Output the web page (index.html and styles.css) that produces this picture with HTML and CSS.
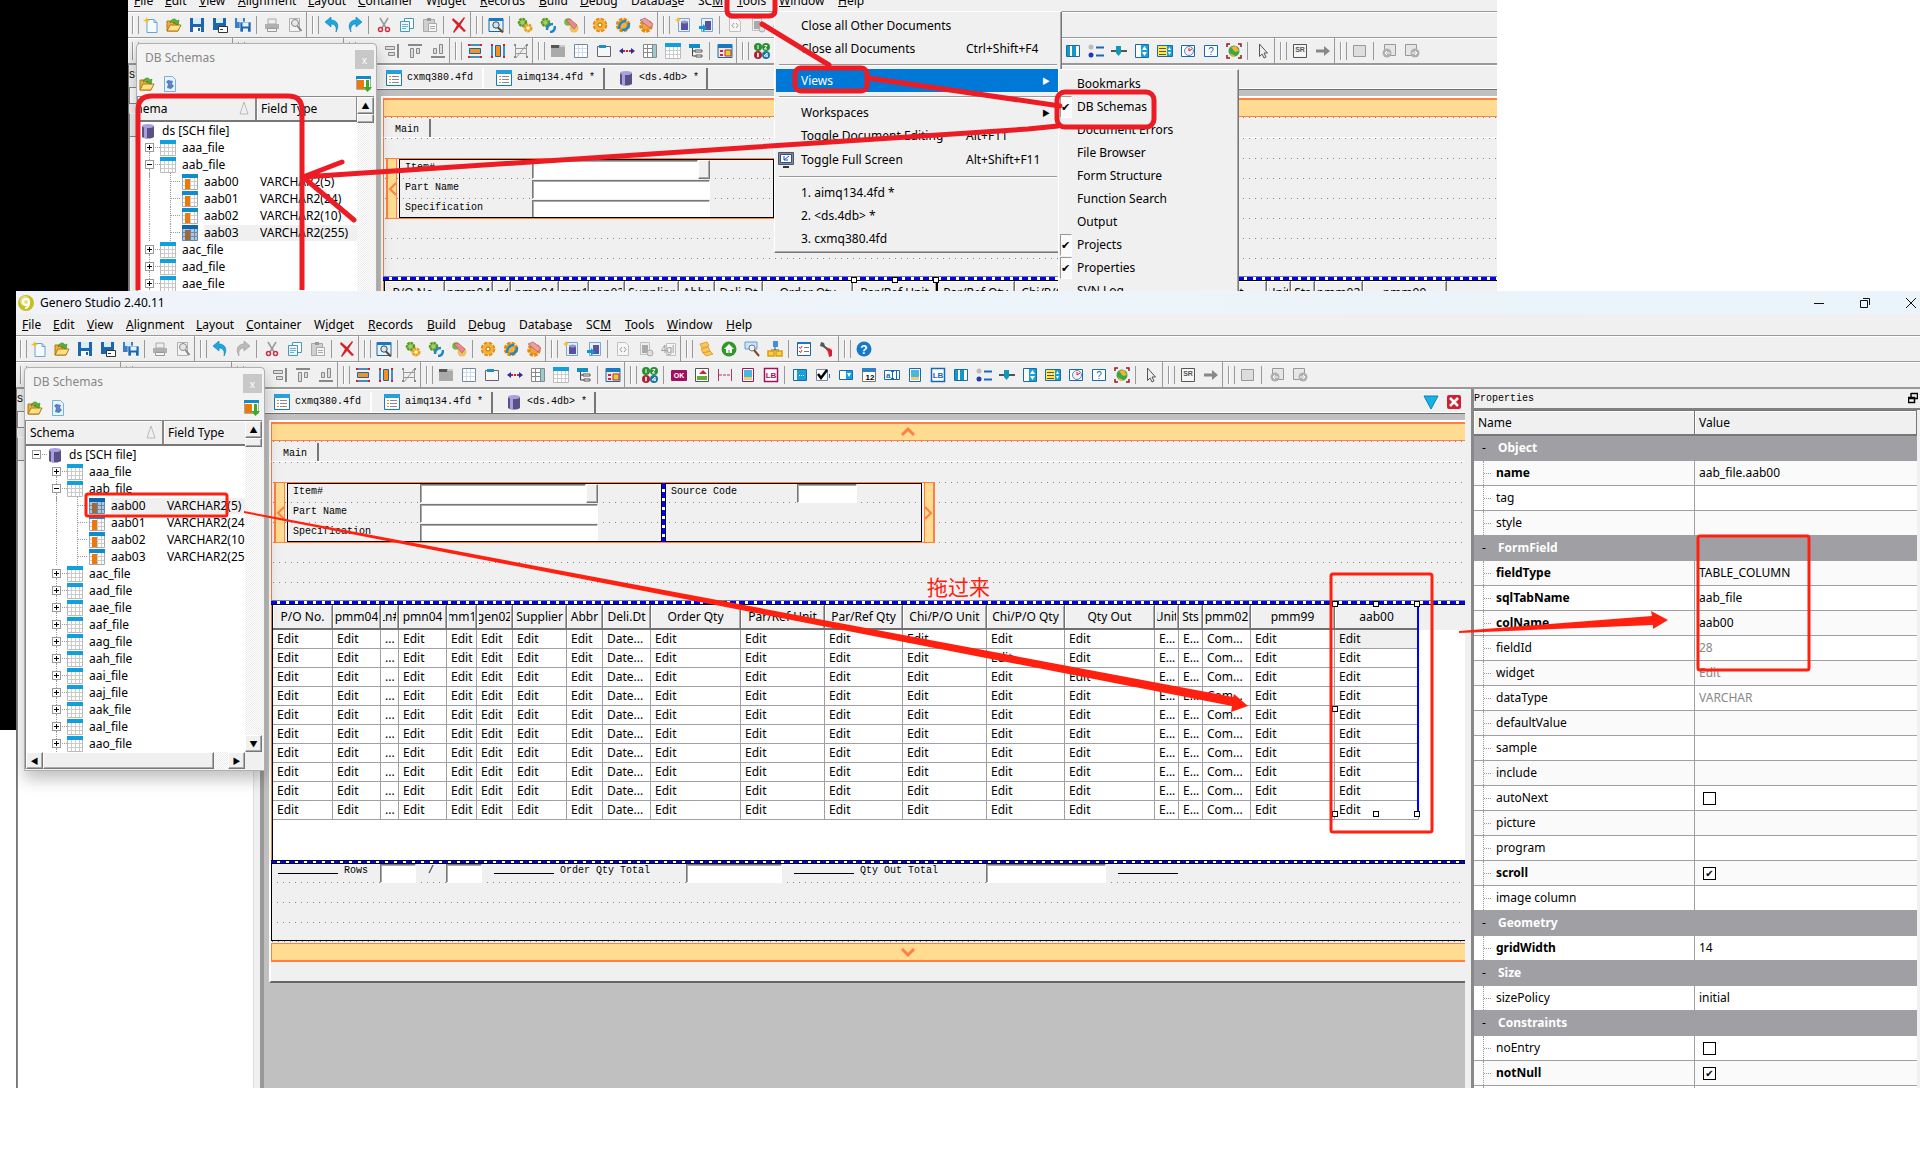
FILE: index.html
```html
<!DOCTYPE html>
<html lang="en">
<head>
<meta charset="utf-8">
<title>Genero Studio 2.40.11</title>
<link rel="stylesheet" href="styles.css">
</head>
<body>
<svg class="sprite" aria-hidden="true">
  <symbol id="i-new" viewBox="0 0 16 16"><path d="M4 2.500h7l3 3v10H4z" fill="#f4fafe" stroke="#6aa5d0"/><path d="M11 2.500v3h3" fill="none" stroke="#6aa5d0"/><path d="M3.500 0l1 2.500L7 3.500l-2.500 1-1 2.500-1-2.500L0 3.500l2.500-1z" fill="#f8c020"/></symbol>
  <symbol id="i-open" viewBox="0 0 16 16"><path d="M1 14V4h4l1 1.500h6V14z" fill="#e8b040" stroke="#b07810"/><path d="M1 14l3-6h11l-3 6z" fill="#ffe08a" stroke="#b07810"/><path d="M4 6c1-5 6-5 7-2l2-1-1 5-5-2 2-1c-1-1-3-1-5 1z" fill="#58b030" stroke="#2e7a14" stroke-width=".5"/></symbol>
  <symbol id="i-save" viewBox="0 0 16 16"><path d="M1 1h14v14H1z" fill="#1c66ae"/><path d="M4 1h8v6H4z" fill="#d8ebf8"/><path d="M4 10h8v5H4z" fill="#fff"/><path d="M9 11h2v3H9z" fill="#1c66ae"/></symbol>
  <symbol id="i-saveas" viewBox="0 0 16 16"><path d="M1 1h13v12H1z" fill="#1c66ae"/><path d="M4 1h7v5H4z" fill="#d8ebf8"/><path d="M6.500 9.500h9v6h-9z" fill="#fff" stroke="#333"/><path d="M8 12h3v1H8z" fill="#333"/></symbol>
  <symbol id="i-saveall" viewBox="0 0 16 16"><path d="M0 1h10v10H0z" fill="#3a80c0"/><path d="M2 1h6v4H2z" fill="#d8ebf8"/><path d="M5 5h11v10H5z" fill="#1c66ae" stroke="#fff" stroke-width=".6"/><path d="M7.500 5.500h6v4h-6zM8 11.500h5V15H8z" fill="#e6f2fa"/></symbol>
  <symbol id="i-print" viewBox="0 0 16 16"><path d="M4 2h8v5H4z" fill="#eee" stroke="#aaa"/><path d="M1 7h14v5H1z" fill="#b0b0b0"/><path d="M3.500 11.500h9v3h-9z" fill="#f4f4f4" stroke="#999"/></symbol>
  <symbol id="i-preview" viewBox="0 0 16 16"><path d="M2.500 1.500h10v13h-10z" fill="#f4f4f4" stroke="#b0b0b0"/><circle cx="8" cy="6" r="3.500" fill="#e6e6e6" stroke="#888"/><path d="M10.500 9l4 5" stroke="#888" stroke-width="2"/></symbol>
  <symbol id="i-undo" viewBox="0 0 16 16"><path d="M1 5l6-5v3c6 0 9 5 5 12 1-5-1-8-5-8v3z" fill="#18a8e0" stroke="#0c78b0" stroke-width=".6"/></symbol>
  <symbol id="i-redo" viewBox="0 0 16 16"><path d="M15 5L9 0v3C3 3 0 8 4 15 3 10 5 7 9 7v3z" fill="#18a8e0" stroke="#0c78b0" stroke-width=".6"/></symbol>
  <symbol id="i-redo-off" viewBox="0 0 16 16"><path d="M15 5L9 0v3C3 3 0 8 4 15 3 10 5 7 9 7v3z" fill="#bbb" stroke="#999" stroke-width=".6"/></symbol>
  <symbol id="i-cut" viewBox="0 0 16 16"><path d="M4 1l6 10M12 1L6 11" stroke="#999" stroke-width="1.500"/><circle cx="4.500" cy="12.500" r="2" fill="none" stroke="#c83040" stroke-width="1.500"/><circle cx="11.500" cy="12.500" r="2" fill="none" stroke="#c83040" stroke-width="1.500"/></symbol>
  <symbol id="i-copy" viewBox="0 0 16 16"><path d="M5.500 1.500h9v10h-9z" fill="#fff" stroke="#4898b8"/><path d="M1.500 4.500h9v10h-9z" fill="#eef8fc" stroke="#4898b8"/><path d="M3 7.500h6M3 9.500h6M3 11.500h4" stroke="#68b0cc"/></symbol>
  <symbol id="i-paste" viewBox="0 0 16 16"><path d="M1.500 2.500h11v12h-11z" fill="#d0d0d0" stroke="#aaa"/><path d="M5 1h4v3H5z" fill="#999"/><path d="M6.500 6.500h8v8h-8z" fill="#f6f6f6" stroke="#aaa"/><path d="M8 9.500h5M8 11.500h5" stroke="#aaa"/></symbol>
  <symbol id="i-delete" viewBox="0 0 16 16"><path d="M2 1l6 5 5-6 1 1-4.500 7L15 14l-2 1-5-5-5 6-1-1 4-7L1 3z" fill="#d82028"/></symbol>
  <symbol id="i-find" viewBox="0 0 16 16"><path d="M1 1.500h14v13H1z" fill="#e6f3fc" stroke="#1868a8"/><path d="M1 1h14v3H1z" fill="#1878c0"/><circle cx="8" cy="8" r="3.200" fill="#c8e8fa" stroke="#444"/><path d="M10 10.500l5 5" stroke="#704018" stroke-width="2"/></symbol>
  <symbol id="i-build1" viewBox="0 0 16 16"><circle cx="5.500" cy="5.500" r="3.500" fill="#a0d068" stroke="#5a9820" stroke-width="2.500" stroke-dasharray="2.500 .7"/><circle cx="11" cy="11" r="3.300" fill="#f8d060" stroke="#e8a020" stroke-width="2.500" stroke-dasharray="2.500 .7"/><circle cx="11" cy="11" r="1.300" fill="#fff"/></symbol>
  <symbol id="i-build2" viewBox="0 0 16 16"><circle cx="5.500" cy="5.500" r="3.500" fill="#a0d068" stroke="#5a9820" stroke-width="2.500" stroke-dasharray="2.500 .7"/><path d="M7 13c0-4 2-6 6-6M10 15c3 0 5-2 5-6" fill="none" stroke="#2088c8" stroke-width="2.500"/></symbol>
  <symbol id="i-build3" viewBox="0 0 16 16"><circle cx="5" cy="5" r="3.800" fill="#78b840"/><circle cx="11" cy="11" r="4.500" fill="#f0c060"/><path d="M3 3l4-1 7 6-3 4z" fill="#e88890" stroke="#b85860" stroke-width=".7"/></symbol>
  <symbol id="i-gear1" viewBox="0 0 16 16"><circle cx="8" cy="8" r="5.500" fill="#f8b030" stroke="#e08c10" stroke-width="3.500" stroke-dasharray="3.200 1.100"/><circle cx="8" cy="8" r="5.500" fill="#f8b030"/><circle cx="8" cy="8" r="2" fill="#fff" stroke="#b06808"/></symbol>
  <symbol id="i-gear2" viewBox="0 0 16 16"><circle cx="8" cy="8" r="5.500" fill="#f8b030" stroke="#e08c10" stroke-width="3.500" stroke-dasharray="3.200 1.100"/><path d="M4 12c0-5 3-8 7-8M7 13c5 0 7-3 7-7" fill="none" stroke="#2088c8" stroke-width="2.500"/></symbol>
  <symbol id="i-gear3" viewBox="0 0 16 16"><circle cx="8" cy="9" r="5" fill="#f8a040" stroke="#e08c10" stroke-width="3.500" stroke-dasharray="3.200 1.100"/><path d="M2 3l5-2 8 6-3 4z" fill="#e8a0a8" stroke="#b85860" stroke-width=".7"/></symbol>
  <symbol id="i-dbnew" viewBox="0 0 16 16"><path d="M3.500 1.500h11v13h-11z" fill="#e4f0fa" stroke="#78a8d0"/><path d="M6 5h7v8H6z" fill="#5850a0"/><ellipse cx="9.500" cy="5" rx="3.500" ry="1.500" fill="#9890d8"/><path d="M3 0l1 2 2 1-2 1-1 2-1-2-2-1 2-1z" fill="#f8c020"/></symbol>
  <symbol id="i-dbin" viewBox="0 0 16 16"><path d="M3.500 1.500h11v13h-11z" fill="#e4f0fa" stroke="#78a8d0"/><path d="M7 4h6v9H7z" fill="#5850a0"/><path d="M1 9h4V7l4 4-4 4v-3H1z" fill="#1890d8"/></symbol>
  <symbol id="i-code" viewBox="0 0 16 16"><path d="M2.500 1.500h8l3 3v10h-11z" fill="#f6f6f6" stroke="#c0c0c0"/><path d="M7 6L5 8.500 7 11M9 6l2 2.500L9 11" fill="none" stroke="#999"/></symbol>
  <symbol id="i-dboff" viewBox="0 0 16 16"><path d="M2.500 1.500h9v12h-9z" fill="#eee" stroke="#c0c0c0"/><path d="M4 4h6v8H4z" fill="#aaa"/><circle cx="12" cy="12" r="3" fill="#ddd" stroke="#aaa"/></symbol>
  <symbol id="i-fgl" viewBox="0 0 16 16"><path d="M5.500 2.500h9v12h-9z" fill="#f6f6f6" stroke="#c0c0c0"/><text x="0" y="12" font-size="10" font-family="Liberation Sans" fill="#999">4gl</text></symbol>
  <symbol id="i-db2" viewBox="0 0 16 16"><path d="M2 3l7-2 2 4-7 2zM3 8l7-2 2 4-7 2zM5 12l7-2 3 3-7 2z" fill="#f8c860" stroke="#e8a030"/></symbol>
  <symbol id="i-home" viewBox="0 0 16 16"><circle cx="8" cy="8" r="7.500" fill="#2f9a28"/><path d="M8 3L3 8h2v4h2.500V9h1v3H11V8h2z" fill="#fff"/></symbol>
  <symbol id="i-codefind" viewBox="0 0 16 16"><path d="M1 1h12v7H1z" fill="#c8e4f6" stroke="#60a0cc"/><circle cx="8" cy="7" r="3" fill="#eef" stroke="#777"/><path d="M10 9l5 6" stroke="#804820" stroke-width="2"/></symbol>
  <symbol id="i-tree2" viewBox="0 0 16 16"><path d="M6 0h5v6H6z" fill="#4090e0"/><path d="M8 6v3M4 9h8" stroke="#555"/><path d="M1 10h6v5H1zM9 10h6v5H9z" fill="#f8d040" stroke="#d8a010" stroke-width="1.500"/></symbol>
  <symbol id="i-prefs" viewBox="0 0 16 16"><path d="M1.500 1.500h13v13h-13z" fill="#fff" stroke="#1868a8"/><path d="M1 1h14v2H1z" fill="#1878c0"/><path d="M3 6l1.500 1.500L6 5M3 10l1.500 1.500L6 9" stroke="#d02020" fill="none"/><path d="M8 6.500h5M8 10.500h5" stroke="#777"/></symbol>
  <symbol id="i-tools" viewBox="0 0 16 16"><path d="M2 1l3 1 1 3 3 2-1 2-4-3-3-1z" fill="#555"/><path d="M7 8l3-1 3 2v6l-3 1-1-5z" fill="#d82028"/></symbol>
  <symbol id="i-help" viewBox="0 0 16 16"><circle cx="8" cy="8" r="7.500" fill="#1878c8"/><text x="8" y="12.500" text-anchor="middle" font-size="12" font-weight="bold" font-family="Liberation Sans" fill="#fff">?</text></symbol>
  <symbol id="i-al1" viewBox="0 0 16 16"><path d="M1.500 3.500h9v3h-9zM4.500 9.500h6v3h-6z" fill="#ddd" stroke="#888"/><path d="M14 1v14" stroke="#888" stroke-width="2"/></symbol>
  <symbol id="i-al2" viewBox="0 0 16 16"><path d="M1 2h14" stroke="#888" stroke-width="2"/><path d="M3.500 5.500h3v9h-3zM9.500 5.500h3v5h-3z" fill="#ddd" stroke="#888"/></symbol>
  <symbol id="i-al3" viewBox="0 0 16 16"><path d="M1 14h14" stroke="#888" stroke-width="2"/><path d="M3.500 5.500h3v5h-3zM9.500 1.500h3v9h-3z" fill="#ddd" stroke="#888"/></symbol>
  <symbol id="i-lh" viewBox="0 0 16 16"><path d="M2 2h12M2 14h12" stroke="#1868a8" stroke-width="1.500"/><path d="M2.500 5.500h11v5h-11z" fill="#f89020" stroke="#1868a8"/><path d="M1 1h2v2H1zM13 1h2v2h-2zM1 13h2v2H1zM13 13h2v2h-2z" fill="#d02030"/></symbol>
  <symbol id="i-lv" viewBox="0 0 16 16"><path d="M2 2v12M14 2v12" stroke="#1868a8" stroke-width="1.500"/><path d="M5.500 2.500h5v11h-5z" fill="#f89020" stroke="#1868a8"/><path d="M1 1h2v2H1zM13 1h2v2h-2zM1 13h2v2H1zM13 13h2v2h-2z" fill="#d02030"/></symbol>
  <symbol id="i-lx" viewBox="0 0 16 16"><path d="M2.500 2v12M13.500 2v12M2 5.500h12M2 10.500h12M3 15L14 1" fill="none" stroke="#999"/><path d="M1 1h2v2H1zM13 1h2v2h-2zM1 13h2v2H1zM13 13h2v2h-2z" fill="#888"/></symbol>
  <symbol id="i-folder" viewBox="0 0 16 16"><path d="M1 2h14v12H1z" fill="#aaa"/><path d="M1 2h8v3H1z" fill="#555"/><path d="M10 2h5v2h-5z" fill="#ccc"/></symbol>
  <symbol id="i-grid" viewBox="0 0 16 16"><path d="M1.500 1.500h13v13h-13z" fill="#fff" stroke="#789"/><path d="M5.500 2v12M9.500 2v12M2 5.500h12M2 9.500h12" stroke="#cde"/></symbol>
  <symbol id="i-group" viewBox="0 0 16 16"><path d="M1.500 3.500h13v10h-13z" fill="#f6f6f6" stroke="#667"/><path d="M3 2h7v3H3z" fill="#1890c8"/></symbol>
  <symbol id="i-hbox" viewBox="0 0 16 16"><path d="M0 8l4-3v6zM16 8l-4-3v6z" fill="#2030b0"/><path d="M4 8h8" stroke="#d02030" stroke-width="2" stroke-dasharray="2 1"/></symbol>
  <symbol id="i-scrollgrid" viewBox="0 0 16 16"><path d="M1.500 1.500h13v13h-13zM2 5.500h12M2 9.500h12M5.500 2v12M10.500 2v12" fill="#fff" stroke="#888"/><path d="M11 2h3v12h-3z" fill="#9cc"/></symbol>
  <symbol id="i-table" viewBox="0 0 16 16"><path d="M.5 2.500h15v13H.5z" fill="#fff" stroke="#bbb"/><path d="M0 0h16v4H0z" fill="#10a0dc"/><path d="M4.500 4v11M8.500 4v11M12.500 4v11M1 7.500h14M1 11.500h14" stroke="#ccc"/></symbol>
  <symbol id="i-tree" viewBox="0 0 16 16"><path d="M1 1h11v4H1z" fill="#108cc8"/><path d="M4.500 5v8H8M4.500 8H8" fill="none" stroke="#444"/><path d="M7 7h7v2H7zM8 12h6v2H8z" fill="#fff" stroke="#555"/></symbol>
  <symbol id="i-form" viewBox="0 0 16 16"><path d="M1 1.500h14v13H1z" fill="#f4e8d0" stroke="#1868a8"/><path d="M1 1h14v4H1z" fill="#1878c0"/><path d="M8 7h6v6H8z" fill="#e8d020" stroke="#b82858"/><path d="M3 7h3v2H3zM3 11h3v2H3z" fill="#b82858"/></symbol>
  <symbol id="i-1234" viewBox="0 0 16 16"><g font-size="9" font-weight="bold" font-family="Liberation Sans" text-anchor="middle"><circle cx="4" cy="4" r="4" fill="#289030"/><circle cx="12" cy="4" r="4" fill="#289030"/><circle cx="4" cy="12" r="4" fill="#b02030"/><circle cx="12" cy="12" r="4" fill="#1878a8"/></g><path d="M4 2v4M10.500 2.500h2.500L10.500 6H13M3 10l2 1-2 1 2 1-2 1M13 14v-4l-3 3h4" fill="none" stroke="#fff"/></symbol>
  <symbol id="i-ok" viewBox="0 0 16 16"><rect x="0" y="3" width="16" height="11" rx="1" fill="#a01060"/><text x="8" y="11" text-anchor="middle" font-size="7" font-weight="bold" font-family="Liberation Sans" fill="#fff">OK</text></symbol>
  <symbol id="i-image" viewBox="0 0 16 16"><path d="M1.500 1.500h13v13h-13z" fill="#fff" stroke="#555"/><path d="M5 7l4-4 4 4z" fill="#d02030"/><path d="M3 9h10v4H3z" fill="#60b030"/></symbol>
  <symbol id="i-hline" viewBox="0 0 16 16"><path d="M1.500 2v12M14.500 2v12" fill="none" stroke="#b03070"/><path d="M2 8h12" stroke="#b03070" stroke-dasharray="3 1"/></symbol>
  <symbol id="i-pic" viewBox="0 0 16 16"><path d="M2.500 1.500h11v13h-11z" fill="#fff" stroke="#a01060"/><path d="M4 3h8v10H4z" fill="#48b8e0"/><path d="M4 10h8v3H4z" fill="#f0d060"/></symbol>
  <symbol id="i-picb" viewBox="0 0 16 16"><path d="M2.500 1.500h11v13h-11z" fill="#fff" stroke="#1868b8"/><path d="M4 3h8v10H4z" fill="#48b8e0"/><path d="M4 10h8v3H4z" fill="#f0d060"/></symbol>
  <symbol id="i-lb" viewBox="0 0 16 16"><path d="M1.500 1.500h13v13h-13z" fill="#fff" stroke="#a01060" stroke-width="1.500"/><text x="8" y="11" text-anchor="middle" font-size="8" font-weight="bold" font-family="Liberation Sans" fill="#a01060">LB</text></symbol>
  <symbol id="i-lbb" viewBox="0 0 16 16"><path d="M1.500 1.500h13v13h-13z" fill="#fff" stroke="#1868b8" stroke-width="1.500"/><text x="8" y="11" text-anchor="middle" font-size="8" font-weight="bold" font-family="Liberation Sans" fill="#1868b8">LB</text></symbol>
  <symbol id="i-btnedit" viewBox="0 0 16 16"><path d="M1.500 2.500h13v11h-13z" fill="#f0f8ff" stroke="#1868b8"/><path d="M5 3h9v10H5z" fill="#18a0d8"/><path d="M7 8.500h6" stroke="#fff" stroke-dasharray="1 1"/></symbol>
  <symbol id="i-check" viewBox="0 0 16 16"><path d="M1.500 2.500h11v11h-11z" fill="#fff" stroke="#78a"/><path d="M3 7l3 4 6-8" fill="none" stroke="#000" stroke-width="2.500"/><path d="M14.500 7v4" stroke="#1868b8"/></symbol>
  <symbol id="i-combo" viewBox="0 0 16 16"><path d="M1.500 3.500h13v9h-13z" fill="#fff" stroke="#1868b8"/><path d="M8 4h6v8H8z" fill="#18a0d8"/><path d="M9 6h4l-2 4z" fill="#fff"/></symbol>
  <symbol id="i-date" viewBox="0 0 16 16"><path d="M1.500 2.500h13v12h-13z" fill="#fff" stroke="#777"/><path d="M1 1h14v4H1z" fill="#3080c8"/><text x="9" y="13" text-anchor="middle" font-size="8" font-weight="bold" font-family="Liberation Sans">12</text></symbol>
  <symbol id="i-edit" viewBox="0 0 16 16"><path d="M.5 3.500h15v9H.5z" fill="#fff" stroke="#1868b8"/><text x="2" y="11" font-size="8" font-weight="bold" font-family="Liberation Sans" fill="#1868b8">a</text><path d="M8.500 5v6M7 4.500h3M7 11.500h3M12.500 4v8" stroke="#1868b8"/></symbol>
  <symbol id="i-prog" viewBox="0 0 16 16"><path d="M1.500 2.500h13v11h-13z" fill="#fff" stroke="#1868b8"/><path d="M2 3h3v10H2zM7 3h4v10H7z" fill="#1498c8"/></symbol>
  <symbol id="i-radio" viewBox="0 0 16 16"><circle cx="3" cy="4" r="2.500" fill="#bbb"/><circle cx="3" cy="12" r="2.500" fill="#2038c0"/><path d="M8 4.500h8M8 12.500h8" stroke="#1868b8" stroke-width="2"/></symbol>
  <symbol id="i-slider" viewBox="0 0 16 16"><path d="M0 8h16" stroke="#555" stroke-width="2"/><path d="M5 3h5v7l-2.500 3L5 10z" fill="#1098b8"/></symbol>
  <symbol id="i-spin" viewBox="0 0 16 16"><path d="M1.500 1.500h13v13h-13z" fill="#fff" stroke="#1868b8"/><path d="M7 2h7v12H7z" fill="#18a0d8"/><path d="M8 7h5l-2.500-4zM8 9h5l-2.500 4z" fill="#fff"/></symbol>
  <symbol id="i-text" viewBox="0 0 16 16"><path d="M.5 2.500h15v11H.5z" fill="#ffe850" stroke="#1868b8"/><path d="M2 5.500h7M2 8.500h7M2 11.500h7" stroke="#555"/><path d="M10 3h5v10h-5z" fill="#18a0d8"/><path d="M11 7h3l-1.500-3zM11 9h3l-1.500 3z" fill="#fff"/></symbol>
  <symbol id="i-time" viewBox="0 0 16 16"><path d="M1.500 2.500h13v11h-13z" fill="#fff" stroke="#1868b8"/><circle cx="9" cy="8" r="4.500" fill="#f0f0fa" stroke="#68a"/><path d="M9 8V5M9 8l3-2" stroke="#d02020"/></symbol>
  <symbol id="i-unk" viewBox="0 0 16 16"><path d="M1.500 2.500h13v11h-13z" fill="#fff" stroke="#1868b8"/><text x="8" y="12" text-anchor="middle" font-size="10" font-family="Liberation Sans" fill="#1868b8">?</text></symbol>
  <symbol id="i-web" viewBox="0 0 16 16"><circle cx="8" cy="8" r="5.500" fill="#38a848"/><path d="M5 4l5-1 3 5-4 1zM4 10l5 3-3 1z" fill="#f8b030"/><path d="M1 4V1h3M12 1h3v3M15 12v3h-3M4 15H1v-3" fill="none" stroke="#a01020" stroke-width="1.500"/></symbol>
  <symbol id="i-arrow" viewBox="0 0 16 16"><path d="M4.500 1l8 9H9l2 4-2 1-2-4-2.500 2.500z" fill="#eee" stroke="#555"/></symbol>
  <symbol id="i-sr" viewBox="0 0 16 16"><path d="M1.500 1.500h13v13h-13z" fill="#f6f6f6" stroke="#555"/><text x="8" y="9" text-anchor="middle" font-size="7" font-weight="bold" font-family="Liberation Sans" fill="#555">SR</text></symbol>
  <symbol id="i-go" viewBox="0 0 16 16"><path d="M1 6.500h8V3l6 5-6 5V9.500H1z" fill="#888"/></symbol>
  <symbol id="i-box" viewBox="0 0 16 16"><path d="M1.500 2.500h12v11h-12z" fill="#ddd" stroke="#999"/></symbol>
  <symbol id="i-back" viewBox="0 0 16 16"><path d="M3.500 1.500h11v11h-11z" fill="#e6e6e6" stroke="#999"/><circle cx="6" cy="10" r="4.500" fill="#b0b0b0"/><path d="M9 10H4M6 8l-2 2 2 2" fill="none" stroke="#fff"/></symbol>
  <symbol id="i-fwd" viewBox="0 0 16 16"><path d="M1.500 1.500h11v11h-11z" fill="#e6e6e6" stroke="#999"/><circle cx="11" cy="10" r="4.500" fill="#b0b0b0"/><path d="M8 10h5M11 8l2 2-2 2" fill="none" stroke="#fff"/></symbol>
  <symbol id="i-db" viewBox="0 0 16 16"><path d="M2 3v11c3 2 9 2 12 0V3z" fill="#5a5088"/><path d="M4 3v12h3V3z" fill="#a8a0d8"/><ellipse cx="8" cy="3" rx="6" ry="2" fill="#a8a0e0"/></symbol>
  <symbol id="i-column" viewBox="0 0 16 16"><path d="M.5 2.500h15v13H.5z" fill="#fff" stroke="#aaa"/><path d="M0 0h16v4H0z" fill="#108cc8"/><path d="M8.500 4v11M12.500 4v11M1 7.500h14M1 11.500h14" stroke="#ccc"/><path d="M3 5h5v10H3z" fill="#f07808"/></symbol>
  <symbol id="i-column-on" viewBox="0 0 16 16"><path d="M.5 2.500h15v13H.5z" fill="#a8c8e8" stroke="#68a"/><path d="M0 0h16v4H0z" fill="#0868b0"/><path d="M8.500 4v11M12.500 4v11M1 7.500h14M1 11.500h14" stroke="#789"/><path d="M3 5h5v10H3z" fill="#a06838"/></symbol>
  <symbol id="i-import" viewBox="0 0 16 16"><path d="M.5 2.500h14v11H.5z" fill="#fff" stroke="#aaa"/><path d="M0 0h15v3H0z" fill="#108cc8"/><path d="M1 4h7v9H1z" fill="#f07808"/><path d="M10 4h3v7h3l-4.500 5L7 11h3z" fill="#40a828"/></symbol>
  <symbol id="i-refresh" viewBox="0 0 16 16"><path d="M2.500.5h8l3 3v12h-11z" fill="#e8f4fd" stroke="#78b0dc"/><path d="M6 4l5 1-1 3 2 2-3 3-4-1 1-4-2-2z" fill="#5080c8"/><path d="M7 6l2 1-1 3z" fill="#b070c0"/></symbol>
  <symbol id="i-doc" viewBox="0 0 16 16"><path d="M.5 1.500h15v14H.5z" fill="#fff" stroke="#1878c0"/><path d="M0 0h16v4H0z" fill="#28a0e0"/><path d="M3 6.500h2M3 9.500h2M3 12.500h2" stroke="#d89020"/><path d="M6 6.500h7M6 9.500h7M6 12.500h7" stroke="#889"/></symbol>
  <symbol id="i-full" viewBox="0 0 16 16"><path d="M.5.5h15v12H.5z" fill="#889" stroke="#555"/><path d="M2.500 2.500h11v8h-11z" fill="#fff" stroke="#2050b0"/><path d="M6 4v4h4M6 8l5-4" fill="none" stroke="#2050b0"/><path d="M5 14h6v2H5z" fill="#333"/></symbol>
  <symbol id="i-logo" viewBox="0 0 16 16"><circle cx="8" cy="8" r="8" fill="#c8c020"/><circle cx="7" cy="6" r="5" fill="#e4e080"/><circle cx="8" cy="7" r="3" fill="none" stroke="#fff" stroke-width="2"/><path d="M11 7c0 4-1 6-4 6" fill="none" stroke="#fff" stroke-width="2"/></symbol>
</svg>

<main class="desktop">
  <div class="backdrop"></div>

  <section class="window window-back" data-scroll="19" data-selected="aab03" data-columns="19">
    <div class="app"></div>
    <div class="menu menu-window" role="menu">
      <button class="item" role="menuitem">Close all Other Documents</button>
      <button class="item" role="menuitem">Close all Documents<span class="keys">Ctrl+Shift+F4</span></button>
      <hr>
      <button class="item active" role="menuitem">Views<span class="more">▶</span></button>
      <hr>
      <button class="item" role="menuitem">Workspaces<span class="more">▶</span></button>
      <button class="item" role="menuitem">Toggle Document Editing<span class="keys">Alt+F11</span></button>
      <button class="item tall" role="menuitem"><svg class="item-icon"><use href="#i-full"/></svg>Toggle Full Screen<span class="keys">Alt+Shift+F11</span></button>
      <hr>
      <button class="item" role="menuitem">1. aimq134.4fd *</button>
      <button class="item" role="menuitem">2. &lt;ds.4db&gt; *</button>
      <button class="item" role="menuitem">3. cxmq380.4fd</button>
    </div>
    <div class="menu menu-views" role="menu">
      <button class="item" role="menuitem">Bookmarks</button>
      <button class="item" role="menuitem"><span class="tick">✔</span>DB Schemas</button>
      <button class="item" role="menuitem">Document Errors</button>
      <button class="item" role="menuitem">File Browser</button>
      <button class="item" role="menuitem">Form Structure</button>
      <button class="item" role="menuitem">Function Search</button>
      <button class="item" role="menuitem">Output</button>
      <button class="item" role="menuitem"><span class="tick">✔</span>Projects</button>
      <button class="item" role="menuitem"><span class="tick">✔</span>Properties</button>
      <button class="item" role="menuitem">SVN Log</button>
    </div>
  </section>

  <section class="window window-front" data-scroll="0" data-selected="aab00" data-columns="20" data-properties="yes">
    <div class="app"></div>
  </section>

  <svg class="notes" width="1920" height="1088" viewBox="0 0 1920 1088" aria-hidden="true">
    <g fill="none" stroke="#ed1c24" stroke-width="5" stroke-linecap="round" stroke-linejoin="round">
      <path d="M138 290V110q0-14 14-14h136q14 0 14 14v180" stroke-linecap="butt"/>
      <path d="M727 0v10q0 6 6 6h36q6 0 6-6V0M762 24l67 41"/>
      <rect x="795" y="68" width="72" height="23" rx="6"/>
      <path d="M868 78l192 28"/>
      <rect x="1057" y="92" width="97" height="35" rx="8"/>
      <path d="M1058 126l-30 3-725 48M342 162l-39 15 51 43" stroke-width="5"/>
    </g>
    <g fill="none" stroke="#ff2010" stroke-width="3">
      <rect x="86" y="494" width="141" height="22" rx="2"/>
      <rect x="1331" y="574" width="101" height="258" rx="2"/>
      <rect x="1698" y="536" width="111" height="134" rx="2"/>
    </g>
    <g fill="#ff2010">
      <path d="M244 511L1233 697l1-3 14 12-17 6 1-6L244 513z"/>
      <path d="M1459 631l193-15-1-5 17 9-15 9v-4l-194 8z"/>
      <text class="note-text" x="927" y="595">拖过来</text>
    </g>
  </svg>
</main>
<script src="app.js"></script>
</body>
</html>
```
FILE: styles.css
```css
* { box-sizing: border-box; }
body {
  margin: 0;
  background: #fff;
  color: #000;
  font: 12px/16px "Noto Sans", "Noto Sans CJK SC", sans-serif;
}
button { font: inherit; color: inherit; padding: 0; border: 0; background: none; text-align: left; }
ul { list-style: none; margin: 0; padding: 0; }
.sprite { display: none; }
.ico { width: 16px; height: 16px; display: block; flex: none; }
.mono { font: 10px/14px "Liberation Mono", monospace; white-space: pre; }

/* desktop */
.desktop { position: relative; height: 1088px; overflow: hidden; }
.backdrop { position: absolute; left: 0; top: 0; width: 128px; height: 730px; background: #000; }
.window { position: absolute; background: #f0f0f0; overflow: hidden; }
.window-back { left: 128px; right: 423px; top: -33px; height: 324px; }
.window-front { left: 16px; right: 0; top: 291px; bottom: 0; }
.app { display: flex; flex-direction: column; height: 100%; }
.window-back .app { min-height: 800px; }
.notes { position: absolute; left: 0; top: 0; }
.note-text { font: 21px "Noto Sans CJK SC", sans-serif; }

/* title bar and menu bar */
.titlebar { display: flex; align-items: center; height: 23px; padding-left: 2px; background: linear-gradient(90deg, #f0f3fa, #eaf4fa); }
.titlebar h1 { margin: 0 auto 0 6px; font-size: 12px; font-weight: 400; }
.titlebar button { width: 46px; height: 22px; display: flex; justify-content: center; align-items: center; }
.titlebar button:last-child { width: 18px; margin-left: 14px; }
.titlebar button svg { width: 12px; height: 12px; fill: none; stroke: #111; }
.menubar { display: grid; grid-template-columns: 31px 34px 39px 70px 50px 68px 54px 59px 41px 51px 67px 39px 42px 59px 40px; height: 21px; padding-left: 6px; align-items: center; }
.menubar button { white-space: nowrap; }

/* toolbars */
.toolrow { display: flex; height: 26px; border-top: 1px solid #999; box-shadow: inset 0 1px #fff; }
.toolrow + .toolrow { border-bottom: 2px solid #999; height: 28px; }
.toolgroup { display: flex; align-items: center; padding-left: 12px; border-right: 1px solid #999; margin-right: 1px; position: relative; }
.toolgroup:first-child { padding-left: 11px; }
.toolgroup::before { content: ""; position: absolute; left: 4px; top: 4px; bottom: 3px; width: 5px; border: solid #999; border-width: 0 1px; box-shadow: inset 1px 0 #fff; }
.toolgroup button { width: 23px; height: 22px; display: grid; place-items: center; }
.toolgroup i { width: 1px; height: 18px; margin: 0 3px 0 2px; background: #999; }
.toolgroup:last-child { border-right: 0; }
.toolgroup.four { width: 105px; }
.toolgroup.five { width: 110px; }

/* main split */
.main { flex: 1; display: flex; min-height: 0; }
.dock { width: 248px; flex: none; display: flex; flex-direction: column; border-left: 1px solid #777; border-right: 4px solid #999; padding-right: 6px; }
.dock-title { height: 22px; padding-top: 4px; }
.dock-combo { height: 17px; background: #fff; border: 1px solid #888; }
.dock-head { height: 24px; margin-top: 9px; border: 1px solid #888; border-top-color: #fff; }
.dock-list { flex: 1; background: #fff; border-left: 1px solid #888; border-right: 1px solid #ddd; }

/* editor */
.editor { flex: 1; min-width: 0; display: flex; flex-direction: column; }
.tabs { display: flex; align-items: center; height: 25px; padding: 2px 0 0 1px; border-bottom: 1px solid #707070; box-shadow: inset 0 1px #fff, inset 0 -1px #fff; }
.tab { display: flex; align-items: center; gap: 5px; height: 21px; border-right: 2px solid #fff; }
.tab.first { width: 107px; padding-left: 9px; }
.tab.second { width: 121px; padding-left: 12px; border-right-color: #777; }
.tab.third { width: 103px; padding-left: 13px; border-right-color: #777; }
.tab-tools { margin-left: auto; display: flex; gap: 7px; padding-right: 3px; }
.canvas { flex: 1; background: #c0c0c0; padding: 6px 0 0 5px; overflow: hidden; }
.form { border: solid #fff; border-width: 2px 0 0 2px; background: #f0f0f0; border-bottom: 2px solid #666; }
.dots { background: conic-gradient(from 270deg at 1px 1px, #888 90deg, transparent 0) 7px 0 / 6px 20px; }
.band { height: 19px; border: solid #ff8040; border-width: 2px 0 1px 1px; background: #ffdc91; padding-left: 628px; }
.band.bottom { border-width: 1px 0 2px 1px; }
.band svg { display: block; width: 16px; height: 16px; fill: none; stroke: #ff8040; stroke-width: 3; }
.pages { height: 21px; padding-top: 2px; border-bottom: 1px solid #fff; border-left: 1px solid #ff8040; }
.page-tab { display: block; width: 47px; height: 18px; padding: 4px 0 0 11px; border-right: 2px solid #777; }
.page { height: 138px; padding: 20px 0 0 2px; border-left: 1px solid #ff8040; }
.hbox { display: flex; width: 661px; height: 61px; border: 1px solid #ff8040; border-left: 0; border-right: 0; }
.strip { width: 11px; background: #ffdc91; border: solid #ff8040; border-width: 0 1px 0 2px; display: flex; align-items: center; }
.strip.right { border-width: 0 2px 0 1px; margin-left: auto; }
.strip svg { width: 8px; height: 16px; fill: none; stroke: #ff8040; stroke-width: 2; }
.cell { border: 1px solid #000; margin-left: 2px; width: 375px; display: grid; grid-template-columns: 132px 178px; grid-auto-rows: 20px; height: 59px; overflow: hidden; }
.cell.source { margin-left: 0; width: 257px; grid-template-columns: 131px 60px; }
.cell label { padding-left: 5px; padding-top: 1px; }
.divider { width: 3px; background: repeating-linear-gradient(#00f 0 6px, #fff 6px 9px); }
.sunken { width: 100%; height: 19px; margin: 0; padding: 0 3px; border: 1px solid; border-color: #777 #fff #fff #777; outline: 0; background: #fff; box-shadow: inset 1px 1px #aaa; border-radius: 0; }
.pick { display: flex; }
.pick button { width: 12px; height: 19px; flex: none; background: #f0f0f0; border: 1px solid; border-color: #fff #777 #777 #fff; box-shadow: inset -1px -1px #aaa; }
.rule { height: 5px; border: solid #808080; border-width: 1px 0; border-bottom-color: #000; background: repeating-linear-gradient(90deg, #00f 0 6px, #fff 6px 9px); }
.rule.low { height: 4px; border-top-color: #000; }
.sheet { height: 255px; padding-left: 1px; background: #fff; border-left: 1px solid #ff8040; box-shadow: inset 1px 0 #000; position: relative; }
.sheet table, .props table { border-collapse: separate; border-spacing: 0; table-layout: fixed; }
.sheet table { width: 100%; }
.sheet th { height: 25px; padding: 0 2px; font-weight: 400; background: #f0f0f0; border: solid #707070; border-width: 0 1px 2px 0; box-shadow: inset 1px 1px #fff, inset -1px 0 #aaa; }
.sheet th span { display: flex; justify-content: center; white-space: nowrap; overflow: hidden; }
.sheet th:last-child { border: 0; box-shadow: none; }
.sheet td { height: 19px; padding: 0 0 0 4px; border: solid #a0a0a4; border-width: 0 1px 1px 0; white-space: nowrap; overflow: hidden; }
.sheet td:last-child { border: 0; }
.sheet td.picked { background: #f0f0f0; }
.selection { position: absolute; }
.selection::before { content: ""; position: absolute; right: 0; top: 3px; bottom: 0; border-right: 2px solid #00f; }
.selection.new { left: 1060px; width: 87px; top: -4px; height: 216px; }
.selection.old { left: 467px; width: 87px; top: -4px; height: 230px; }
.selection.old::before { border-color: #000; }
.selection b { position: absolute; width: 6px; height: 6px; background: #fff; border: 1px solid #000; }
.selection b:nth-child(1) { left: 0; top: 0; }
.selection b:nth-child(2) { left: 41px; top: 0; }
.selection b:nth-child(3) { right: -1px; top: 0; }
.selection b:nth-child(4) { left: 0; top: 105px; }
.selection b:nth-child(5) { left: 0; bottom: 0; }
.selection b:nth-child(6) { left: 41px; bottom: 0; }
.selection b:nth-child(7) { right: -1px; bottom: 0; }
.totals { height: 77px; border-left: 1px solid #000; border-bottom: 1px solid #000; display: flex; gap: 12px; padding-left: 6px; background-position: 5px 18px; }
.totals .line { width: 60px; height: 10px; border-bottom: 1px solid #000; }
.totals label { margin-left: -6px; }
.w36 { width: 36px; } .w96 { width: 96px; } .w120 { width: 120px; }
.totals .qty { width: 114px; } .totals .out { width: 114px; }
.gap { height: 2px; }
.tail { height: 19px; }

/* DB Schemas floating panel */
.schemas { position: absolute; left: 8px; top: 76px; width: 241px; height: 404px; background: #f3f3f3; border: 1px solid #b0b0b0; border-radius: 4px 4px 0 0; box-shadow: 0 8px 16px rgba(0,0,0,.25); }
.schemas header { display: flex; justify-content: space-between; height: 30px; padding: 6px 2px 0 8px; color: #888; }
.schemas header button { width: 19px; height: 19px; background: #c8c8c8; color: #fff; text-align: center; font-size: 10px; }
.schema-tools { display: flex; gap: 7px; height: 22px; padding: 2px 4px 4px 2px; }
.schema-tools button:last-child { margin-left: auto; }
.browser { display: grid; grid-template-columns: 1fr 17px; margin-right: 2px; border: solid #888; border-width: 1px 0 0 1px; background: #fff; }
.view { overflow: hidden; height: 331px; }
.view-inner { width: 239px; }
.cols { display: flex; height: 25px; background: #f0f0f0; border-bottom: 2px solid #777; align-items: center; }
.cols span { height: 23px; padding: 4px 0 0 4px; border-right: 2px solid #888; box-shadow: inset 1px 1px #fff; display: flex; justify-content: space-between; }
.cols span:first-child { width: 138px; padding-right: 6px; }
.cols span:last-child { width: 101px; }
.cols svg { width: 10px; height: 14px; fill: none; stroke: #bbb; }
.tree li { display: flex; height: 17px; align-items: center; }
.tree .name { display: flex; align-items: center; width: 141px; flex: none; height: 17px; gap: 6px; white-space: nowrap; }
.tree .l0 { padding-left: 6px; }
.tree .l1 { padding-left: 26px; }
.tree .l2 { padding-left: 30px; }
.tree .l2::before { content: ""; }
.twist { width: 9px; height: 9px; border: 1px solid #999; background: linear-gradient(#000, #000) 1px 3px / 5px 1px no-repeat #fff; position: relative; flex: none; }
.twist.plus { background: linear-gradient(#000, #000) 1px 3px / 5px 1px no-repeat, linear-gradient(#000, #000) 3px 1px / 1px 5px no-repeat #fff; }
.twist::after { content: ""; position: absolute; left: 9px; top: 3px; width: 5px; border-top: 1px dotted #999; }
.l1 .twist::before { content: ""; position: absolute; left: 3px; top: 8px; height: 8px; border-left: 1px dotted #999; }
.l2::before { width: 20px; height: 17px; margin-right: -2px; border-left: 1px dotted #999; }
.l2 .branch { width: 10px; height: 17px; margin: 0 -4px 0 -4px; border-left: 1px dotted #999; background: repeating-linear-gradient(90deg, #999 0 1px, transparent 1px 2px) 0 8px / 10px 1px no-repeat; }
.tree .on .type, .tree .on .label { background: #f0f0f0; }
.tree .type, .tree .label { flex: 1; }
.vbar, .hbar { background: repeating-conic-gradient(#fff 0 25%, #ececec 0 50%) 0 0 / 2px 2px; display: flex; justify-content: space-between; }
.vbar { flex-direction: column; }
.vbar button, .hbar button { width: 17px; height: 17px; font-size: 8px; line-height: 14px; text-align: center; background: #f0f0f0; border: 1px solid; border-color: #fff #777 #777 #fff; box-shadow: inset -1px -1px #aaa; }
.vbar .thumb { height: 9px; margin-bottom: auto; }
.hbar .thumb { width: 171px; margin-right: auto; }
.corner { background: #f0f0f0; }

/* properties */
.props { width: 455px; flex: none; padding-left: 6px; display: flex; }
.props-inner { flex: 1; border-left: 3px solid #888; overflow: hidden; }
.props-title { display: flex; justify-content: space-between; height: 21px; padding: 3px 2px 0 0; border-bottom: 2px solid #808080; }
.props-title svg { width: 10px; height: 12px; fill: none; stroke: #000; }
.props table { width: calc(100% - 3px); background: #fff; }
.props th, .props td { height: 25px; padding: 0; text-align: left; border-bottom: 1px solid #a0a0a4; overflow: hidden; white-space: nowrap; }
.props thead th { height: 26px; padding-left: 4px; font-weight: 400; background: #f0f0f0; border: solid #777; border-width: 1px 1px 2px 0; box-shadow: inset 1px 1px #fff; }
.props .name-col { width: 221px; }
.props tbody th { font-weight: 400; border-right: 1px solid #a0a0a4; }
.props tbody th.set { font-weight: 700; }
.props tbody th label, .props tbody th span { display: flex; align-items: center; height: 24px; margin-left: 9px; padding-left: 12px; border-left: 1px dotted #999; background: repeating-linear-gradient(90deg, #999 0 1px, transparent 1px 2px) 0 12px / 8px 1px no-repeat; }
.props tr.odd { background: #fafafa; }
.props td { padding-left: 4px; }
.props td.dim { color: #888; }
.props tr.section td { background: #a0a0a4; color: #fff; font-weight: 700; padding-left: 8px; }
.props tr.section button { width: 16px; color: #000; font-weight: 400; }
.props input { display: block; appearance: none; width: 13px; height: 13px; margin: 0 4px; border: 1px solid #000; background: #fff; }
.props input:checked::after { content: "✔"; display: block; font: 10px/11px "DejaVu Sans", sans-serif; text-align: center; }

/* pop-up menus */
.menu { position: absolute; background: #f0f0f0; border: 1px solid; border-color: #fff #777 #777 #fff; box-shadow: inset -1px -1px #aaa; padding: 2px 1px; }
.menu-window { left: 646px; top: 44px; width: 288px; height: 242px; }
.menu-views { left: 930px; top: 102px; width: 181px; height: 240px; }
.menu .item { position: relative; display: flex; align-items: center; width: 100%; height: 23px; padding-left: 25px; white-space: nowrap; }
.menu .tall { height: 25px; }
.menu-views .item { padding-left: 17px; }
.menu .active { background: #0078d7; color: #fff; }
.menu hr { margin: 4px 3px; border: 0; height: 1px; background: #999; box-shadow: 0 1px #fff; }
.keys { position: absolute; left: 190px; }
.more { margin-left: auto; padding-right: 10px; font-size: 8px; }
.item-icon { position: absolute; left: 2px; width: 16px; height: 16px; }
.tick { position: absolute; left: 0; width: 12px; height: 22px; font: 11px/22px "DejaVu Sans", sans-serif; background: #fafafa; border: 1px solid; border-color: #999 #fff #fff #999; }
```
FILE: app.js
```js
const icon = (id) => `<svg class="ico" aria-hidden="true"><use href="#i-${id}"/></svg>`;

/* "|" marks a separator inside a tool group */
const fileTools = (back) => [
  'new open save saveas saveall | print preview',
  `undo ${back ? 'redo' : 'redo-off'} | cut copy paste | delete`,
  'find | build1 build2 build3 | gear1 gear2 gear3',
  'dbnew dbin | code dboff fgl',
  'db2 home codefind tree2 | prefs tools',
  'help',
];
const formTools = [
  '', '',
  'al2 al1 al2 al3',
  'lh lv lx',
  'folder grid group hbox scrollgrid table tree | form',
  '1234 | ok image hline pic lb | btnedit check combo date edit picb lbb prog radio slider spin text time unk web | arrow',
  'sr go',
  'box | back fwd',
];
const toolrow = (groups) => `<div class="toolrow" role="toolbar">${groups.map((g, n) => {
  const cls = g ? '' : n ? ' five' : ' four';
  const tools = g ? g.split(' ').map((t) => t === '|' ? '<i></i>' : `<button aria-label="${t}">${icon(t)}</button>`).join('') : '';
  return `<div class="toolgroup${cls}">${tools}</div>`;
}).join('')}</div>`;

const menus = ['<u>F</u>ile', '<u>E</u>dit', '<u>V</u>iew', '<u>A</u>lignment', '<u>L</u>ayout', '<u>C</u>ontainer', 'W<u>i</u>dget',
  '<u>R</u>ecords', '<u>B</u>uild', '<u>D</u>ebug', 'Databa<u>s</u>e', 'SC<u>M</u>', '<u>T</u>ools', '<u>W</u>indow', '<u>H</u>elp'];

const fields = [['aab00', 'VARCHAR2(5)'], ['aab01', 'VARCHAR2(24)'], ['aab02', 'VARCHAR2(10)'], ['aab03', 'VARCHAR2(255)']];
const tree = (selected) => {
  const row = (level, mark, ico, text, type = '', on = false) =>
    `<li class="${on ? 'on' : ''}"><span class="name l${level}">${mark}${icon(ico)}<span class="label">${text}</span></span><span class="type">${type}</span></li>`;
  const files = 'aaa aab aac aad aae aaf aag aah aai aaj aak aal aao'.split(' ');
  return row(0, '<span class="twist"></span>', 'db', 'ds [SCH file]') + files.map((f) => {
    const open = f === 'aab';
    return row(1, `<span class="twist${open ? '' : ' plus'}"></span>`, 'table', `${f}_file`) +
      (open ? fields.map(([n, t]) => row(2, '<span class="branch"></span>', n === selected ? 'column-on' : 'column', n, t, n === selected)).join('') : '');
  }).join('');
};

const schemas = (selected) => `<aside class="schemas">
  <header>DB Schemas<button aria-label="Close">x</button></header>
  <div class="schema-tools"><button aria-label="Open">${icon('open')}</button><button aria-label="Refresh">${icon('refresh')}</button><button aria-label="Import">${icon('import')}</button></div>
  <div class="browser">
    <div class="view"><div class="view-inner">
      <div class="cols"><span>Schema<svg viewBox="0 0 10 14"><path d="M1 13L5 1l4 12z"/></svg></span><span>Field Type</span></div>
      <ul class="tree">${tree(selected)}</ul>
    </div></div>
    <div class="vbar"><button aria-label="Up">▲</button><button class="thumb" aria-label="Scroll"></button><button aria-label="Down">▼</button></div>
    <div class="hbar"><button aria-label="Left">◀</button><button class="thumb" aria-label="Scroll"></button><button aria-label="Right">▶</button></div>
    <div class="corner"></div>
  </div>
</aside>`;

const columns = [['P/O No.', 60], ['pmm04', 48], ['Ln#', 18, '...'], ['pmn04', 48], ['pmm12', 30], ['gen02', 36], ['Supplier', 54], ['Abbr', 36],
  ['Deli.Dt', 48, 'Date...'], ['Order Qty', 90], ['Par/Ref Unit', 84], ['Par/Ref Qty', 78], ['Chi/P/O Unit', 84], ['Chi/P/O Qty', 78],
  ['Qty Out', 90], ['Unit', 24, 'E...'], ['Sts', 24, 'E...'], ['pmm02', 48, 'Com...'], ['pmm99', 84], ['aab00', 84]];
const sheet = (count) => {
  const cols = columns.slice(0, count);
  const row = (n) => `<tr>${cols.map(([name, , text = 'Edit']) => `<td${name === 'aab00' && n === 0 ? ' class="picked"' : ''}>${text}</td>`).join('')}<td></td></tr>`;
  return `<table><colgroup>${cols.map((c) => `<col style="width:${c[1]}px">`).join('')}<col></colgroup>
    <thead><tr>${cols.map((c) => `<th><span>${c[0]}</span></th>`).join('')}<th></th></tr></thead>
    <tbody>${Array.from({ length: 10 }, (_, n) => row(n)).join('')}</tbody></table>
    <div class="selection ${count === 20 ? 'new' : 'old'}">${'<b></b>'.repeat(7)}</div>`;
};

const input = (id, label, cls = '') => `<input class="sunken ${cls}" id="${id}" aria-label="${label}">`;
const editor = (id, count, front) => `<div class="editor">
  <div class="tabs mono">
    <button class="tab first">${icon('doc')}cxmq380.4fd</button><button class="tab second">${icon('doc')}aimq134.4fd *</button><button class="tab third">${icon('db')}&lt;ds.4db&gt; *</button>
    ${front ? `<span class="tab-tools"><button aria-label="List documents"><svg class="ico" viewBox="0 0 16 16"><path d="M1 2h14L8 15z" fill="#18b0e8" stroke="#0880b8"/></svg></button><button aria-label="Close document"><svg class="ico" viewBox="0 0 16 16"><rect x="1" y="1" width="14" height="14" rx="2" fill="#d02030"/><path d="M4 4l8 8M12 4l-8 8" stroke="#fff" stroke-width="2.5"/></svg></button></span>` : ''}
  </div>
  <div class="canvas"><div class="form">
    <div class="band"><svg viewBox="0 0 16 16"><path d="M2 11l6-6 6 6"/></svg></div>
    <div class="pages dots"><button class="page-tab mono">Main</button></div>
    <div class="page dots">
      <div class="hbox">
        <div class="strip"><svg viewBox="0 0 8 16"><path d="M8 2L2 8l6 6"/></svg></div>
        <div class="cell mono">
          <label for="${id}-item">Item#</label><span class="pick">${input(id + '-item', 'Item#')}<button aria-label="Pick item"></button></span>
          <label for="${id}-part">Part Name</label>${input(id + '-part', 'Part Name')}
          <label for="${id}-spec">Specification</label>${input(id + '-spec', 'Specification')}
        </div>
        <div class="divider"></div>
        <div class="cell source mono"><label for="${id}-src">Source Code</label>${input(id + '-src', 'Source Code')}</div>
        <div class="strip right"><svg viewBox="0 0 8 16"><path d="M0 2l6 6-6 6"/></svg></div>
      </div>
    </div>
    <div class="rule"></div>
    <div class="sheet">${sheet(count)}</div>
    <div class="rule low"></div>
    <div class="totals dots mono">
      <span class="line"></span><label for="${id}-row">Rows</label>${input(id + '-row', 'Row', 'w36')}<span>/</span>${input(id + '-rows', 'Rows', 'w36')}
      <span class="line"></span><label class="qty" for="${id}-qty">Order Qty Total</label>${input(id + '-qty', 'Order Qty Total', 'w96')}
      <span class="line"></span><label class="out" for="${id}-out">Qty Out Total</label>${input(id + '-out', 'Qty Out Total', 'w120')}
      <span class="line"></span>
    </div>
    <div class="gap dots"></div>
    <div class="band bottom"><svg viewBox="0 0 16 16"><path d="M2 5l6 6 6-6"/></svg></div>
    <div class="tail"></div>
  </div></div>
</div>`;

/* [name, value, flags]: # section, b changed value, d read only, c tick box */
const properties = [['Object', '', '#'], ['name', 'aab_file.aab00', 'b'], ['tag', ''], ['style', ''],
  ['FormField', '', '#'], ['fieldType', 'TABLE_COLUMN', 'b'], ['sqlTabName', 'aab_file', 'b'], ['colName', 'aab00', 'b'],
  ['fieldId', '28', 'd'], ['widget', 'Edit', 'd'], ['dataType', 'VARCHAR', 'd'], ['defaultValue', ''], ['sample', ''], ['include', ''],
  ['autoNext', false, 'c'], ['picture', ''], ['program', ''], ['scroll', true, 'bc'], ['image column', ''],
  ['Geometry', '', '#'], ['gridWidth', '14', 'b'], ['Size', '', '#'], ['sizePolicy', 'initial'],
  ['Constraints', '', '#'], ['noEntry', false, 'c'], ['notNull', true, 'bc'], ['', '']];
const propertyRow = ([name, value, flags = ''], n) => {
  if (flags === '#') return `<tr class="section"><td colspan="2"><button aria-label="Collapse ${name}">-</button>${name}</td></tr>`;
  const box = flags.includes('c');
  const head = box ? `<label for="p-${name}">${name}</label>` : `<span>${name}</span>`;
  const body = box ? `<input type="checkbox" id="p-${name}"${value ? ' checked' : ''}>` : value;
  return `<tr class="${n % 2 ? 'odd' : ''}"><th scope="row" class="${flags.includes('b') ? 'set' : ''}">${head}</th><td class="${flags === 'd' ? 'dim' : ''}">${body}</td></tr>`;
};
const props = () => `<aside class="props"><div class="props-inner">
  <div class="props-title mono">Properties<button aria-label="Float"><svg viewBox="0 0 10 12"><path d="M3 1.500h6.500v5H7M.5 5.500h6v5h-6zM3 1v4M.5 6.500h6" stroke-width="1.500"/></svg></button></div>
  <table><thead><tr><th class="name-col">Name</th><th>Value</th></tr></thead><tbody>${properties.map(propertyRow).join('')}</tbody></table>
</div></aside>`;

document.querySelectorAll('.window').forEach((win, n) => {
  const { scroll, selected, columns: count, properties: hasProps } = win.dataset;
  win.querySelector('.app').innerHTML = `
    <header class="titlebar">${icon('logo')}<h1>Genero Studio 2.40.11</h1>
      <button aria-label="Minimize"><svg viewBox="0 0 12 12"><path d="M1 6.500h10"/></svg></button>
      <button aria-label="Restore"><svg viewBox="0 0 12 12"><path d="M1.500 3.500h7v7h-7zM4 1.500h6.500V8"/></svg></button>
      <button aria-label="Close"><svg viewBox="0 0 12 12"><path d="M1 1l10 10M11 1L1 11"/></svg></button></header>
    <nav class="menubar">${menus.map((m) => `<button>${m}</button>`).join('')}</nav>
    ${toolrow(fileTools(!hasProps))}${toolrow(formTools)}
    <div class="main">
      <div class="dock"><div class="dock-title mono">Structure</div><div class="dock-combo"></div><div class="dock-head"></div><div class="dock-list"></div></div>
      ${editor('w' + n, Number(count), Boolean(hasProps))}${hasProps ? props() : ''}
    </div>
    ${schemas(selected)}`;
  win.querySelector('.view').scrollLeft = Number(scroll);
});
```
